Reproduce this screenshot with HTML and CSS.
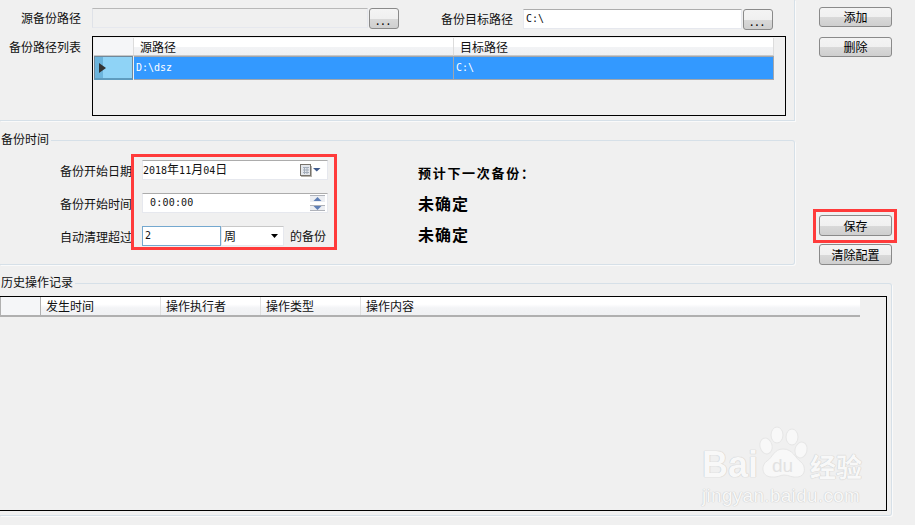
FILE: index.html
```html
<!DOCTYPE html>
<html lang="zh">
<head>
<meta charset="utf-8">
<title>备份</title>
<link rel="stylesheet" href="styles.css">
</head>
<body>
<div class="page">
  <div class="top">
    <div class="left">
      <section class="paths">
        <div class="path-row">
          <span class="label w81">源备份路径</span>
          <div class="field source"></div>
          <button class="btn browse">...</button>
          <div class="target">
            <span class="label">备份目标路径</span>
            <div class="field target-field"><span class="latin">C:\</span></div>
            <button class="btn browse">...</button>
          </div>
        </div>
        <div class="list-row">
          <span class="label w81">备份路径列表</span>
          <div class="grid-box">
            <div class="path-grid">
              <div class="head corner"></div>
              <div class="head">源路径</div>
              <div class="head">目标路径</div>
              <div class="row-head">
                <svg width="7" height="10" viewBox="0 0 7 10"><path d="M0 0L7 5L0 10Z" fill="#333"/></svg>
              </div>
              <div class="cell"><span class="latin">D:\dsz</span></div>
              <div class="cell"><span class="latin">C:\</span></div>
            </div>
          </div>
        </div>
      </section>
      <fieldset class="group time">
        <legend>备份时间</legend>
        <div class="time-body">
          <div class="form">
            <div class="form-row">
              <span class="form-label">备份开始日期</span>
              <div class="field wide date">
                <span><span class="latin dark">2018</span>年<span class="latin dark">11</span>月<span class="latin dark">04</span>日</span>
                <span class="cal">
                  <svg width="21" height="13" viewBox="0 0 21 13">
                    <rect x="0.500" y="0.500" width="10" height="11" fill="#e4e7ec" stroke="#77736c"/>
                    <path d="M1 12.500H12M11.500 2V12" stroke="#b5b2ac" fill="none"/>
                    <path d="M3 3.500H9M3 6H9M3 8.500H9M4.500 3V10M7 3V10" stroke="#a3adba" fill="none"/>
                    <path d="M13 4H20.500L16.750 7.500Z" fill="#3f5a8c"/>
                  </svg>
                </span>
              </div>
            </div>
            <div class="form-row">
              <span class="form-label">备份开始时间</span>
              <div class="field wide">
                <span class="latin dark time-value">0:00:00</span>
                <span class="spin">
                  <span class="spin-btn"><svg width="9" height="4" viewBox="0 0 9 4"><path d="M0.500 4L4.500 0L8.500 4Z" fill="#5f7fb5"/></svg></span>
                  <span class="spin-btn"><svg width="9" height="4" viewBox="0 0 9 4"><path d="M0.500 0L4.500 4L8.500 0Z" fill="#5f7fb5"/></svg></span>
                </span>
              </div>
            </div>
            <div class="form-row">
              <span class="form-label">自动清理超过</span>
              <div class="field count"><span class="latin dark">2</span></div>
              <div class="field combo">
                <span>周</span>
                <svg width="7" height="4" viewBox="0 0 7 4"><path d="M0 0H7L3.500 4Z" fill="#000"/></svg>
              </div>
              <span class="suffix">的备份</span>
            </div>
          </div>
          <div class="forecast">
            <div class="forecast-title">预计下一次备份：</div>
            <div class="forecast-value">未确定</div>
            <div class="forecast-value">未确定</div>
          </div>
        </div>
      </fieldset>
    </div>
    <div class="actions">
      <button class="btn action">添加</button>
      <button class="btn action del">删除</button>
      <button class="btn action save">保存</button>
      <button class="btn action clear">清除配置</button>
    </div>
  </div>
  <fieldset class="group history">
    <legend>历史操作记录</legend>
    <div class="log-box">
      <div class="log-head">
        <div class="log-col c0"></div>
        <div class="log-col c1">发生时间</div>
        <div class="log-col c2">操作执行者</div>
        <div class="log-col c3">操作类型</div>
        <div class="log-col c4">操作内容</div>
      </div>
    </div>
  </fieldset>

  <div class="mark mark-form"></div>
  <div class="mark mark-save"></div>

  <div class="watermark">
    <div class="wm-top">
      <span class="wm-bai">Bai</span>
      <span class="wm-paw">
        <svg width="50" height="54" viewBox="0 0 50 54">
          <g fill="#f8f8f8" stroke="#e6e6e6" stroke-width="1">
            <ellipse cx="7" cy="20" rx="6" ry="8" transform="rotate(-15 7 20)"/>
            <ellipse cx="18" cy="9" rx="6" ry="8"/>
            <ellipse cx="33" cy="11" rx="6" ry="8"/>
            <ellipse cx="42" cy="24" rx="6" ry="8" transform="rotate(15 42 24)"/>
            <path d="M24 23C15 23 14 31 8 35C2 39 2 50 12 51C18 52 21 49 25 49C30 49 33 52 39 51C47 50 47 40 42 36C36 32 34 23 24 23Z"/>
          </g>
        </svg>
        <span class="wm-du">du</span>
      </span>
      <span class="wm-cn">经验</span>
    </div>
    <div class="wm-url">jingyan.baidu.com</div>
  </div>
</div>
</body>
</html>
```
FILE: styles.css
```css
* { box-sizing: border-box; }
html, body { margin: 0; padding: 0; }
body {
  width: 915px;
  height: 525px;
  overflow: hidden;
  background: #f0f0f0;
  font: 12px/14px "Noto Sans CJK SC", "Liberation Sans", sans-serif;
  color: #111;
}
.page { position: relative; width: 915px; height: 525px; overflow: hidden; }
.top { display: flex; height: 265px; }
.left { width: 795px; }

.paths {
  height: 121px;
  padding-top: 8px;
  border-right: 1px solid #d6e0e8;
  border-bottom: 1px solid #d6e0e8;
  box-shadow: 1px 1px 0 #fafafa;
}
.path-row { display: flex; align-items: flex-start; height: 21px; }
.label { line-height: 20px; white-space: nowrap; }
.w81 { width: 81px; margin-right: 11px; text-align: right; flex: none; }
.field {
  display: flex;
  align-items: center;
  height: 20px;
  padding: 0 2px;
  background: #fff;
  border: 1px solid #e6e8ee;
  border-top-color: #acacac;
  flex: none;
}
.source { width: 276px; background: #f0f0f0; border-left-color: #dfe2e8; border-top-color: #b8b8b8; }
.target { display: flex; margin: 1px 0 0 42px; }
.target .label { margin-right: 10px; }
.target-field { width: 219px; }
.latin { font-family: "DejaVu Sans Mono", "Liberation Mono", monospace; font-size: 10px; color: #fff; }
.target-field .latin { color: #111; }
.dark { color: #111; }

.btn {
  display: block;
  padding: 0;
  font: inherit;
  color: #000;
  border: 1px solid #8a8a8a;
  border-radius: 3px;
  background: linear-gradient(#f4f4f4 0, #f0f0f0 50%, #d9d9d9 52%, #cfcfcf 100%);
}
.browse { width: 30px; height: 21px; margin-left: 1px; letter-spacing: 2px; line-height: 22px; flex: none; }

.list-row { display: flex; margin-top: 7px; }
.list-row .label { line-height: 14px; padding-top: 4px; }
.grid-box { width: 694px; height: 80px; border: 1px solid #000; padding: 1px; }
.path-grid {
  display: grid;
  grid-template-columns: 40px 320px 320px;
  grid-template-rows: 18px 24px;
}
.head {
  padding: 2px 0 0 6px;
  font-size: 12px;
  line-height: 14px;
  background: linear-gradient(#fff 0, #fff 50%, #f2f3f5 55%, #f0f1f3 100%);
  border-right: 1px solid #dcdcdc;
  border-bottom: 1px solid #c8c8c8;
}
.corner { background: #f5f6f8; padding: 0; }
.row-head {
  display: flex;
  align-items: center;
  padding-left: 4px;
  margin-right: 1px;
  background: linear-gradient(90deg, #6cb4dc 0, #6cb4dc 8px, #8fd3f6 8px, #8fd3f6 100%);
  border: 1px solid #70889a;
  border-bottom: 2px solid #5f9cbf;
}
.cell {
  display: flex;
  align-items: center;
  padding: 0 0 1px 2px;
  background: #3399ff;
  border: 1px solid #a2a6ac;
  border-width: 1px 1px 1px 0;
}

.group {
  margin: 0;
  padding: 0;
  min-width: 0;
  border: 0;
  border-top: 1px solid #d6e0e8;
  border-right: 1px solid #d6e0e8;
  border-bottom: 1px solid #d6e0e8;
  border-radius: 0 3px 3px 0;
  box-shadow: 1px 1px 0 #fafafa;
}
.group legend { padding: 0 2px 2px 1px; margin-left: 0; line-height: 12px; }
.time { margin-top: 12px; height: 132px; }
.time-body { display: flex; padding-top: 13px; }
.form { width: 418px; padding-left: 60px; }
.form-row { display: flex; align-items: center; height: 20px; margin-bottom: 13px; }
.form-label { width: 82px; flex: none; white-space: nowrap; padding-top: 2px; }
.wide { width: 186px; justify-content: space-between; }
.date { padding-left: 0; }
.cal { display: flex; margin-right: 4px; }
.time-value { margin-left: 5px; letter-spacing: 0.2px; }
.spin { display: flex; flex-direction: column; gap: 3px; margin-right: 0; }
.spin-btn {
  display: flex;
  align-items: center;
  justify-content: center;
  width: 15px;
  height: 7px;
  background: #eceef2;
  border-top: 1px solid #b0b3ba;
}
.spin-btn + .spin-btn { height: 6px; border-bottom: 1px solid #b0b3ba; border-top-color: #b0b3ba; }
.count { width: 79px; border: 1px solid #74a8cf; }
.combo { width: 63px; justify-content: space-between; padding-right: 5px; border-top-color: #c8c8c8; }
.suffix { margin-left: 6px; white-space: nowrap; }
.forecast { padding-top: 3px; }
.forecast-title { height: 20px; line-height: 20px; font-weight: 700; font-size: 13px; letter-spacing: 1.7px; color: #000; }
.forecast-value { height: 20px; margin-top: 11px; line-height: 20px; font-weight: 700; font-size: 16px; letter-spacing: 1px; color: #000; }
.forecast-title + .forecast-value { margin-top: 10px; }

.actions { width: 73px; margin-left: 24px; padding-top: 7px; flex: none; }
.action { width: 73px; height: 20px; line-height: 18px; }
.del { margin-top: 10px; }
.save { margin-top: 158px; height: 21px; }
.clear { margin-top: 8px; height: 21px; }

.history { width: 892px; height: 240px; margin-top: 11px; padding-top: 6px; }
.log-box { width: 887px; height: 215px; border: 1px solid #000; border-left: 0; }
.log-head { display: flex; width: 860px; height: 20px; border-bottom: 2px solid #b0b0b0; background: linear-gradient(#fff 0, #fff 40%, #f3f4f6 60%, #f0f1f3 100%); }
.log-col { padding: 2px 0 0 5px; border-right: 1px solid #e0e0e0; white-space: nowrap; }
.c0 { width: 41px; background: #f5f6f8; border-left: 1px solid #b0b0b0; border-right: 1px solid #b0b0b0; }
.c1 { width: 120px; }
.c2 { width: 100px; }
.c3 { width: 100px; }
.c4 { flex: 1; border-right: 0; }

.mark { position: absolute; border: 3px solid #ff3b3b; pointer-events: none; }
.mark-form { left: 131px; top: 154px; width: 206px; height: 96px; }
.mark-save { left: 813px; top: 209px; width: 84px; height: 34px; }

.watermark {
  position: absolute;
  left: 702px;
  top: 426px;
  width: 166px;
  color: #f8f8f8;
  font-family: "Liberation Sans", sans-serif;
  text-shadow: 0 0 1px #c8c8c8, 0 0 1px #c8c8c8;
}
.wm-top { display: flex; align-items: flex-end; height: 54px; }
.wm-bai { font-size: 36px; line-height: 36px; font-weight: 700; margin-right: 1px; margin-bottom: -3px; }
.wm-paw { position: relative; display: block; width: 50px; height: 54px; flex: none; }
.wm-du { position: absolute; left: 13px; top: 30px; font-size: 19px; line-height: 20px; color: #e2e2e2; text-shadow: none; }
.wm-cn { font: 700 26px/30px "Noto Sans CJK SC", sans-serif; margin-left: 1px; margin-bottom: -1px; white-space: nowrap; }
.wm-url { margin-top: 5px; font-size: 19px; line-height: 22px; letter-spacing: 0.3px; white-space: nowrap; }
```
